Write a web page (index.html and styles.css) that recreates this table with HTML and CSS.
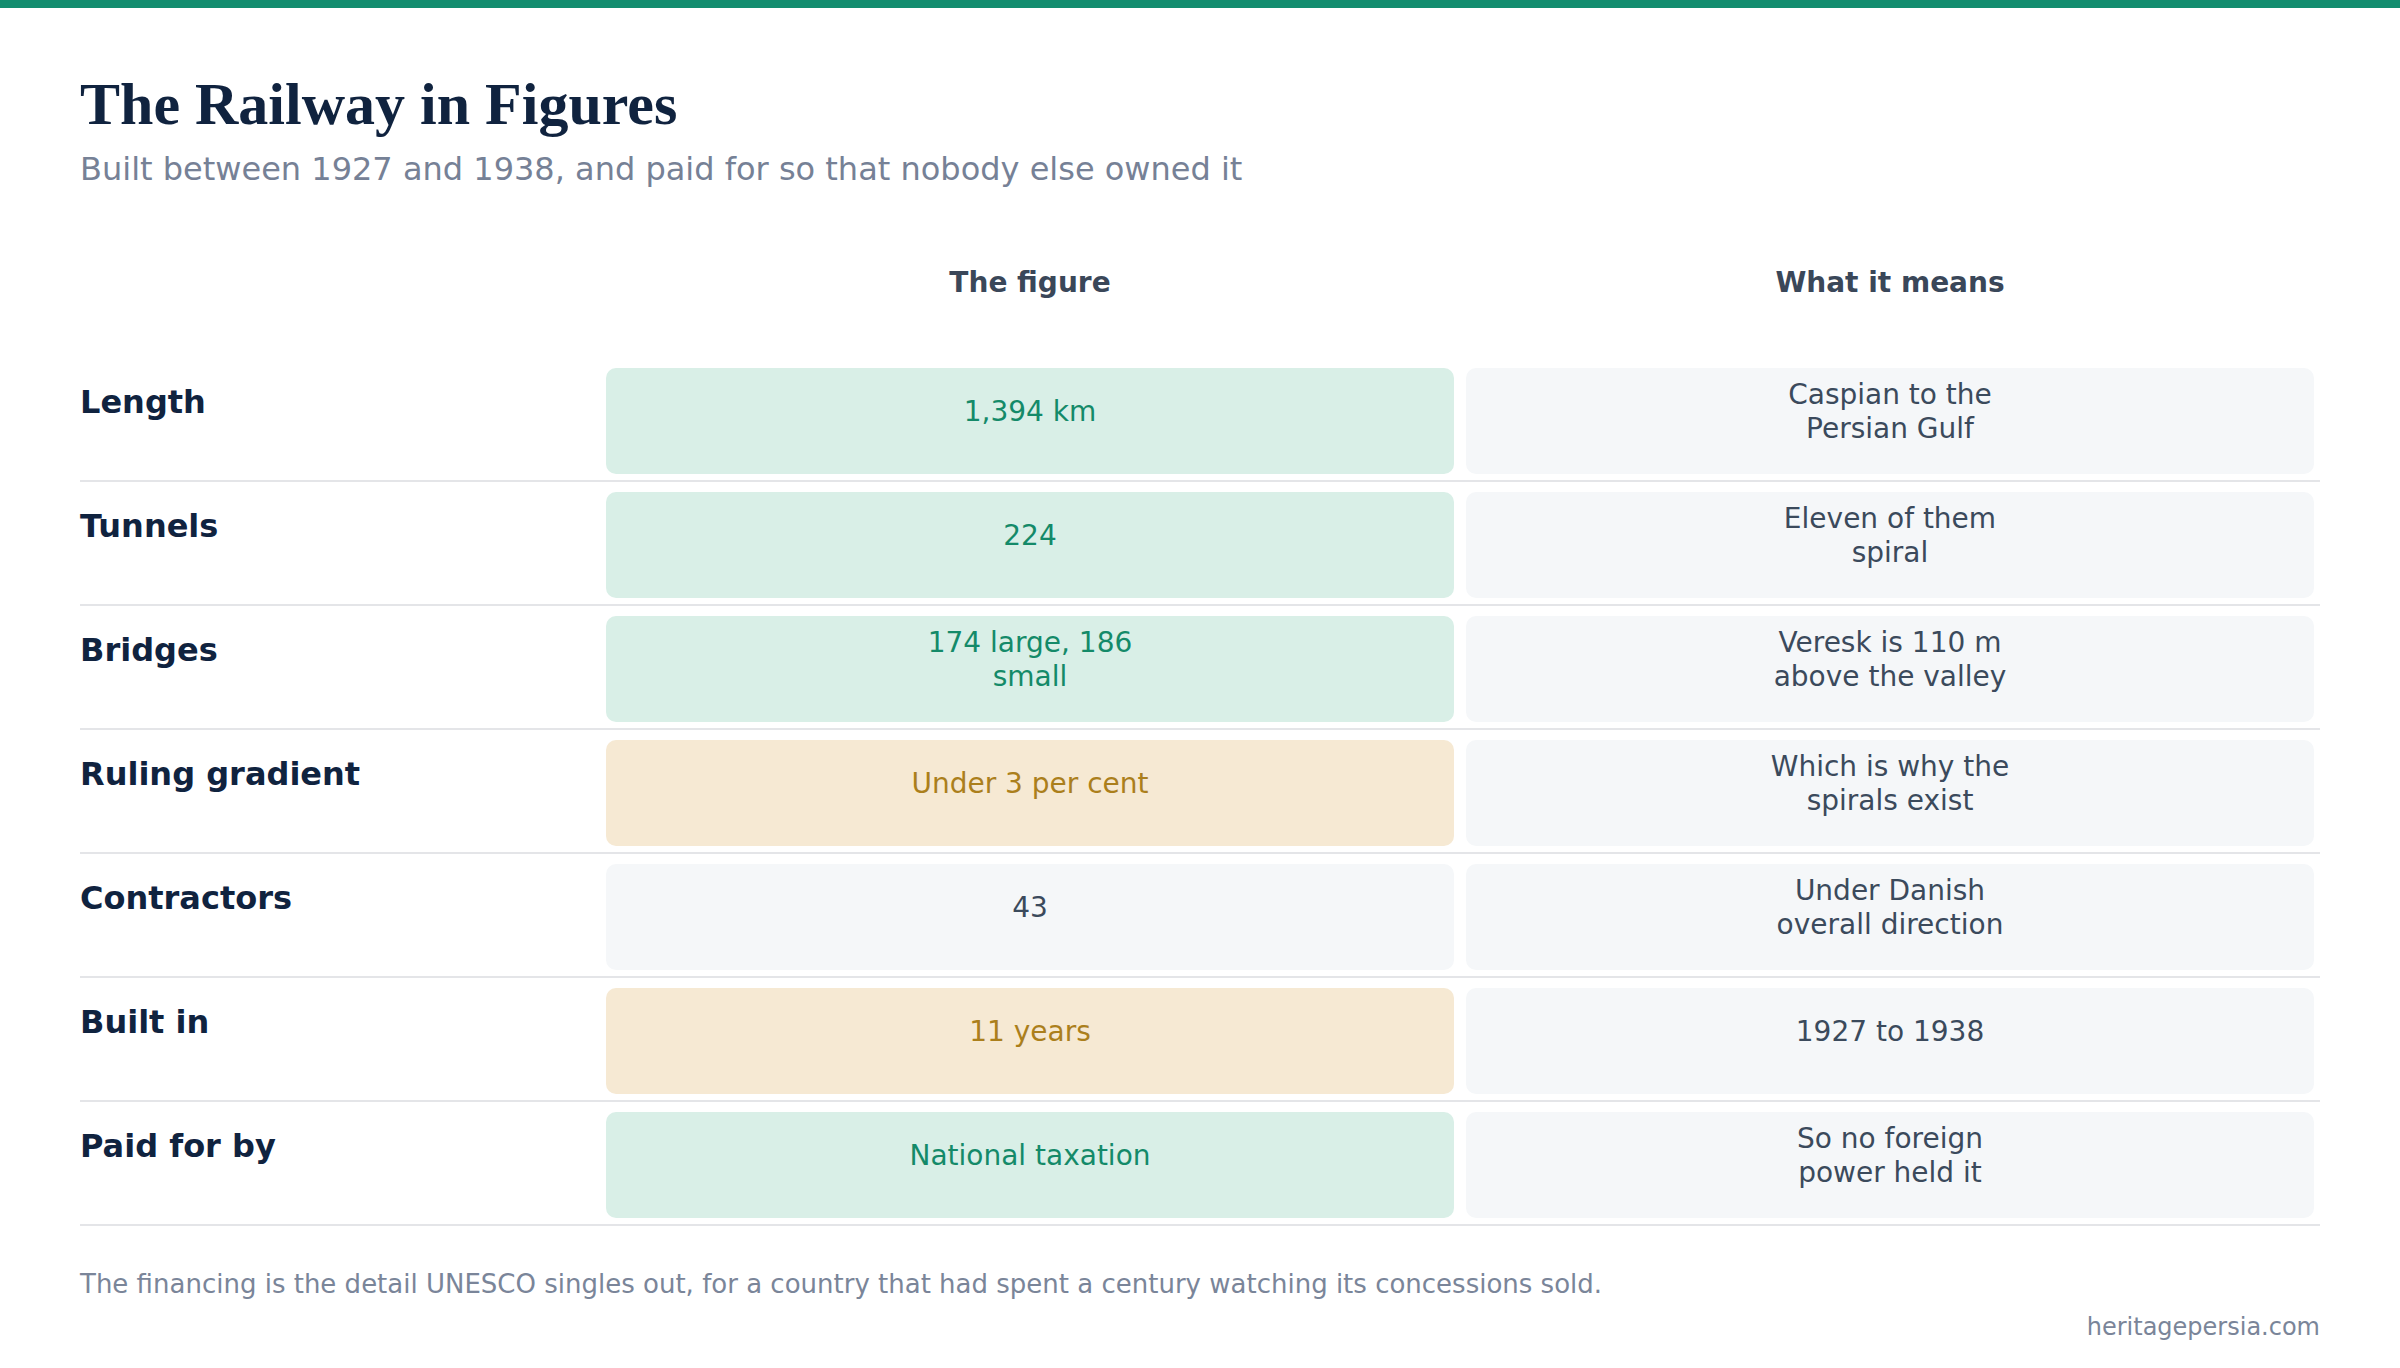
FILE: index.html
```html
<!DOCTYPE html>
<html lang="en">
<head>
<meta charset="utf-8">
<title>The Railway in Figures</title>
<link rel="stylesheet" href="styles.css">
</head>
<body>
<div class="topbar"></div>
<main class="page">
  <h1 class="title">The Railway in Figures</h1>
  <p class="subtitle">Built between 1927 and 1938, and paid for so that nobody else owned it</p>

  <div class="table">
    <div class="row head">
      <div class="label"></div>
      <div class="cell"><div class="colhead">The figure</div></div>
      <div class="cell"><div class="colhead">What it means</div></div>
    </div>

    <div class="row">
      <div class="label">Length</div>
      <div class="cell"><div class="box green"><span>1,394 km</span></div></div>
      <div class="cell"><div class="box plain"><span>Caspian to the Persian Gulf</span></div></div>
    </div>
    <div class="row">
      <div class="label">Tunnels</div>
      <div class="cell"><div class="box green"><span>224</span></div></div>
      <div class="cell"><div class="box plain"><span>Eleven of them spiral</span></div></div>
    </div>
    <div class="row">
      <div class="label">Bridges</div>
      <div class="cell"><div class="box green"><span>174 large, 186 small</span></div></div>
      <div class="cell"><div class="box plain"><span>Veresk is 110 m above the valley</span></div></div>
    </div>
    <div class="row">
      <div class="label">Ruling gradient</div>
      <div class="cell"><div class="box amber"><span>Under 3 per cent</span></div></div>
      <div class="cell"><div class="box plain"><span>Which is why the spirals exist</span></div></div>
    </div>
    <div class="row">
      <div class="label">Contractors</div>
      <div class="cell"><div class="box plain"><span>43</span></div></div>
      <div class="cell"><div class="box plain"><span>Under Danish overall direction</span></div></div>
    </div>
    <div class="row">
      <div class="label">Built in</div>
      <div class="cell"><div class="box amber"><span>11 years</span></div></div>
      <div class="cell"><div class="box plain"><span>1927 to 1938</span></div></div>
    </div>
    <div class="row">
      <div class="label">Paid for by</div>
      <div class="cell"><div class="box green"><span>National taxation</span></div></div>
      <div class="cell"><div class="box plain"><span>So no foreign power held it</span></div></div>
    </div>
  </div>

  <p class="note">The financing is the detail UNESCO singles out, for a country that had spent a century watching its concessions sold.</p>
  <p class="source">heritagepersia.com</p>
</main>
</body>
</html>
```

FILE: styles.css
```css
html, body {
  margin: 0;
  padding: 0;
  background: #ffffff;
}

body {
  font-family: "DejaVu Sans", "Noto Sans", sans-serif;
  color: #334155;
}

.topbar {
  height: 8px;
  background: #138d6f;
}

.page {
  padding: 62px 80px 0;
}

.title {
  margin: 0;
  font-family: "Liberation Serif", "Times New Roman", serif;
  font-weight: 700;
  font-size: 60px;
  line-height: 69px;
  color: #10233f;
}

.subtitle {
  margin: 12px 0 0;
  font-size: 32px;
  line-height: 37px;
  color: #768196;
}

.table {
  margin-top: 78px;
  display: flex;
  flex-direction: column;
}

.row {
  display: grid;
  grid-template-columns: 520px 860px 860px;
  padding: 10px 0 6px;
  border-bottom: 2px solid #e4e5e8;
}

.row.head {
  border-bottom: none;
  padding: 0 0 59px;
}

.colhead {
  text-align: center;
  font-weight: 700;
  font-size: 28px;
  line-height: 33px;
  color: #3a4759;
}

.label {
  padding-top: 16px;
  font-weight: 700;
  font-size: 32px;
  line-height: 37px;
  color: #10233f;
}

.cell {
  padding: 0 6px;
}

.box {
  box-sizing: border-box;
  height: 106px;
  padding: 0 20px 18px;
  border-radius: 10px;
  display: flex;
  align-items: center;
  justify-content: center;
  text-align: center;
  font-size: 28px;
  line-height: 34px;
}

.box span {
  max-width: 262px;
}

.green {
  background: #d9efe7;
  color: #148a69;
}

.amber {
  background: #f6e9d3;
  color: #ab7f1c;
}

.plain {
  background: #f5f7f9;
  color: #3b4a5c;
}

.note {
  margin: 43px 0 0;
  font-size: 26px;
  line-height: 30px;
  color: #7a8599;
}

.source {
  margin: 14px 0 0;
  text-align: right;
  font-size: 24px;
  line-height: 28px;
  color: #7a8599;
}
```
